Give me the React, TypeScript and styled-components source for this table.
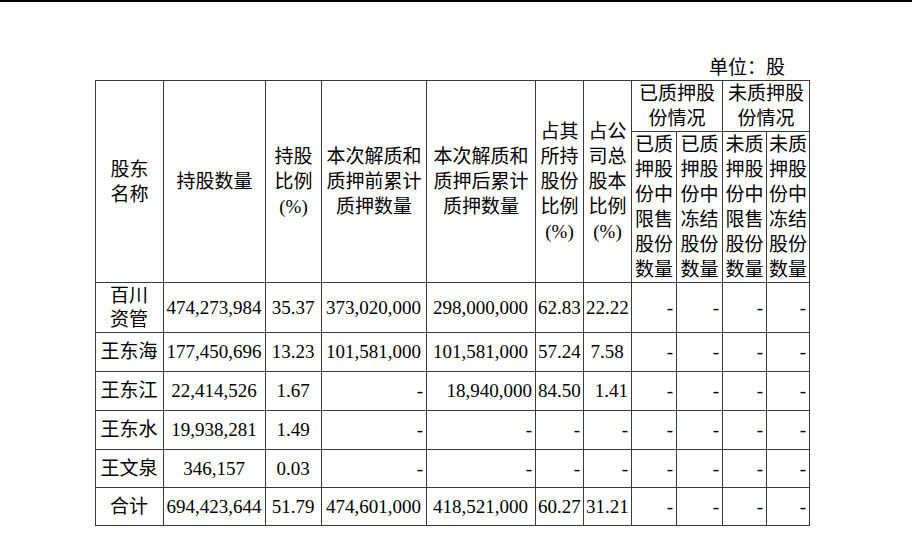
import React from "react";
import styled, { createGlobalStyle } from "styled-components";

const GlobalStyle = createGlobalStyle`
  html, body { margin: 0; padding: 0; background: #ffffff; }
  body {
    font-family: "Liberation Serif", "Noto Sans CJK SC", serif;
    color: #000;
  }
`;

const Page = styled.div`
  width: 912px;
  height: 539px;
  box-sizing: border-box;
  border-top: 2px solid #000;
  overflow: hidden;
  padding: 0 0 0 95px;
`;

const Unit = styled.div`
  width: 714px;
  box-sizing: border-box;
  padding-right: 24px;
  margin-top: 54px;
  height: 24px;
  line-height: 24px;
  text-align: right;
  font-size: 19px;
`;

const Table = styled.table`
  border-collapse: collapse;
  table-layout: fixed;
  width: 715px;
  font-size: 19px;
`;

type Align = "left" | "center" | "right";

const Cell = styled.td<{ $align?: Align; $lh?: number }>`
  border: 1px solid #3a3a3a;
  padding: 0 3px 0 2px;
  text-align: ${(p) => p.$align || "center"};
  vertical-align: middle;
  line-height: ${(p) => p.$lh || 24}px;
  white-space: nowrap;
  overflow: hidden;
`;

const HeadCell = styled(Cell).attrs({ as: "th" })`
  font-weight: normal;
  padding: 0;
  line-height: 25px;
`;

const Row = styled.tr<{ $h: number }>`
  height: ${(p) => p.$h}px;
`;

const widths = [68, 102, 56, 105, 109, 48, 48, 45, 46, 44, 43];

const lines = (s: string) =>
  s.split("/").map((t, i, a) => (
    <React.Fragment key={i}>
      {t}
      {i < a.length - 1 && <br />}
    </React.Fragment>
  ));

type C = { t: string; a?: Align };

const rows: { h: number; cells: C[] }[] = [
  {
    h: 50,
    cells: [
      { t: "百川/资管" },
      { t: "474,273,984" },
      { t: "35.37" },
      { t: "373,020,000" },
      { t: "298,000,000" },
      { t: "62.83" },
      { t: "22.22" },
    ],
  },
  {
    h: 39,
    cells: [
      { t: "王东海" },
      { t: "177,450,696" },
      { t: "13.23" },
      { t: "101,581,000" },
      { t: "101,581,000" },
      { t: "57.24" },
      { t: "7.58" },
    ],
  },
  {
    h: 39,
    cells: [
      { t: "王东江" },
      { t: "22,414,526" },
      { t: "1.67" },
      { t: "-", a: "right" },
      { t: "18,940,000", a: "right" },
      { t: "84.50" },
      { t: "1.41", a: "right" },
    ],
  },
  {
    h: 39,
    cells: [
      { t: "王东水" },
      { t: "19,938,281" },
      { t: "1.49" },
      { t: "-", a: "right" },
      { t: "-", a: "right" },
      { t: "-", a: "right" },
      { t: "-", a: "right" },
    ],
  },
  {
    h: 38,
    cells: [
      { t: "王文泉" },
      { t: "346,157" },
      { t: "0.03" },
      { t: "-", a: "right" },
      { t: "-", a: "right" },
      { t: "-", a: "right" },
      { t: "-", a: "right" },
    ],
  },
  {
    h: 38,
    cells: [
      { t: "合计" },
      { t: "694,423,644" },
      { t: "51.79" },
      { t: "474,601,000" },
      { t: "418,521,000" },
      { t: "60.27" },
      { t: "31.21" },
    ],
  },
];

const mainHeads = [
  "股东/名称",
  "持股数量",
  "持股/比例/(%)",
  "本次解质和/质押前累计/质押数量",
  "本次解质和/质押后累计/质押数量",
  "占其/所持/股份/比例/(%)",
  "占公/司总/股本/比例/(%)",
];

const subHeads = [
  "已质/押股/份中/限售/股份/数量",
  "已质/押股/份中/冻结/股份/数量",
  "未质/押股/份中/限售/股份/数量",
  "未质/押股/份中/冻结/股份/数量",
];

export default function App() {
  return (
    <>
      <GlobalStyle />
      <Page>
        <Unit>单位：股</Unit>
        <Table>
          <colgroup>
            {widths.map((w, i) => (
              <col key={i} style={{ width: w }} />
            ))}
          </colgroup>
          <thead>
            <Row $h={50}>
              {mainHeads.map((h, i) => (
                <HeadCell key={i} rowSpan={2}>
                  {lines(h)}
                </HeadCell>
              ))}
              <HeadCell colSpan={2}>{lines("已质押股/份情况")}</HeadCell>
              <HeadCell colSpan={2}>{lines("未质押股/份情况")}</HeadCell>
            </Row>
            <Row $h={149}>
              {subHeads.map((h, i) => (
                <HeadCell key={i}>{lines(h)}</HeadCell>
              ))}
            </Row>
          </thead>
          <tbody>
            {rows.map((r, ri) => (
              <Row key={ri} $h={r.h}>
                {r.cells.map((c, ci) => (
                  <Cell key={ci} $align={c.a}>
                    {lines(c.t)}
                  </Cell>
                ))}
                {[0, 1, 2, 3].map((k) => (
                  <Cell key={`d${k}`} $align="right">
                    -
                  </Cell>
                ))}
              </Row>
            ))}
          </tbody>
        </Table>
      </Page>
    </>
  );
}
